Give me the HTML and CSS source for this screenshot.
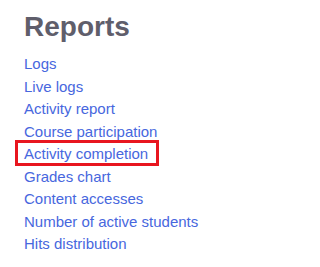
FILE: index.html
```html
<!DOCTYPE html>
<html lang="en">
<head>
<meta charset="utf-8">
<title>Reports</title>
<link rel="stylesheet" href="styles.css">
</head>
<body>
<div class="panel">
  <h1 class="title">Reports</h1>
  <ul class="reports">
    <li><a href="#">Logs</a></li>
    <li><a href="#">Live logs</a></li>
    <li><a href="#">Activity report</a></li>
    <li><a href="#">Course participation</a></li>
    <li><a href="#" class="highlight">Activity completion</a></li>
    <li><a href="#">Grades chart</a></li>
    <li><a href="#">Content accesses</a></li>
    <li><a href="#">Number of active students</a></li>
    <li><a href="#">Hits distribution</a></li>
  </ul>
</div>
</body>
</html>
```
FILE: styles.css
```css
html, body {
  margin: 0;
  padding: 0;
  background: #ffffff;
}
body {
  font-family: "Liberation Sans", Arial, sans-serif;
}
.panel {
  padding: 11px 0 0 24px;
}
.title {
  margin: 0;
  font-size: 28px;
  line-height: 32px;
  font-weight: 700;
  color: #5f5e6b;
}
.reports {
  list-style: none;
  margin: 10px 0 0 0;
  padding: 0;
  font-size: 15px;
  line-height: 22.5px;
}
.reports a {
  color: #4767de;
  text-decoration: none;
}
.highlight {
  position: relative;
  display: inline-block;
}
.highlight::after {
  content: "";
  position: absolute;
  top: -3px;
  bottom: 0;
  left: -9px;
  right: -11px;
  border: 3px solid #e8161f;
}
```
